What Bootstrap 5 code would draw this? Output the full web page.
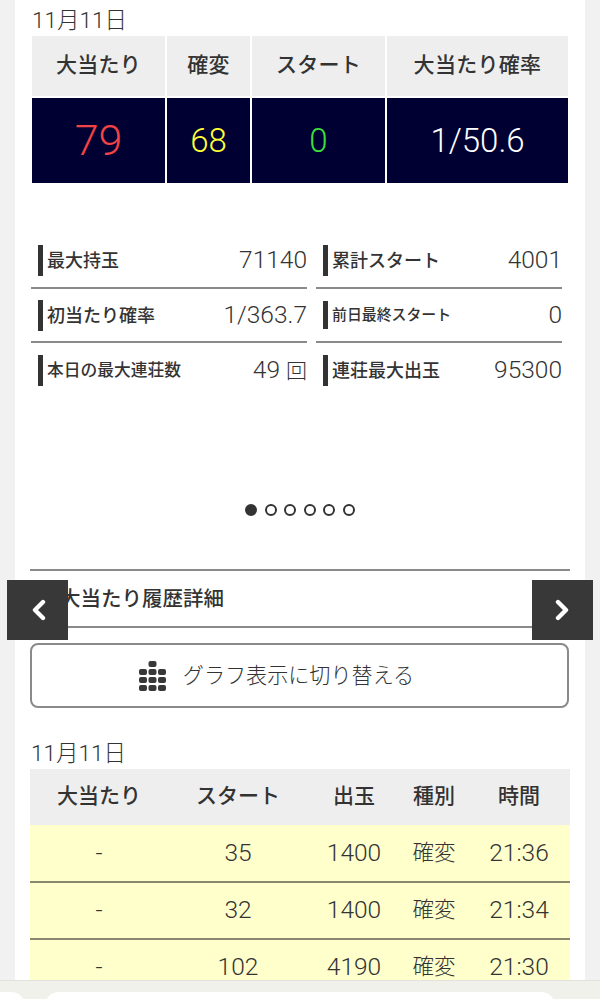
<!DOCTYPE html>
<html lang="ja">
<head>
<meta charset="utf-8">
<title>大当たり履歴</title>
<link href="https://cdn.jsdelivr.net/npm/bootstrap@5.3.0/dist/css/bootstrap.min.css" rel="stylesheet">
<style>
html,body{height:999px;overflow:hidden}
body{background:#f1f1f1;color:#333;font-family:Roboto,"Noto Sans CJK JP",sans-serif;font-weight:300}
.sheet{position:relative;width:570px;height:999px;margin:0 auto;background:#fff;padding:6px 15px 0 15px}
.day{font-size:22.5px;line-height:28px;height:30px;padding-left:2px}
.day-b{padding-left:1px;height:29px;line-height:26px}
.summary{display:grid;grid-template-columns:133px 83px 133px 181px;gap:2px;width:536px;margin-left:2px;text-align:center}
.sum-h{background:#eee;height:60px;display:flex;align-items:center;justify-content:center;font-size:21px;font-weight:500;letter-spacing:.3px}
.sum-v{background:#000033;height:85px;display:flex;align-items:center;justify-content:center;font-size:33px;color:#fff}
.sum-v.hit{font-size:43px;color:#f24345}
.sum-v.prob{color:#ffff37}
.sum-v.st{color:#3ce03c}
.stats{display:grid;grid-template-columns:276px 246px;grid-template-rows:55px 54px 54px;column-gap:9px;margin:51px 0 0 1px}
.stat{display:flex;align-items:center;justify-content:space-between;border-bottom:2px solid #8a8a8a;padding-left:7px}
.stat.last{border-bottom:0}
.stat-l{border-left:5px solid #333;padding-left:4px;height:31px;line-height:31px;font-size:18px;font-weight:500;white-space:nowrap}
.stat-l.tiny{font-size:14.9px;height:28px;line-height:28px}
.stat-l.mid{font-size:16.75px}
.stat-n{font-size:24.5px}
.stat-u{font-size:21px}
.dots{margin-top:106px;gap:7.5px;height:14px}
.dots i{display:block;width:12px;height:12px;border:2px solid #333;border-radius:50%;background:#fff}
.dots i.on{background:#333}
.sec{margin-top:52px;height:59px;border-top:2px solid #8a8a8a;border-bottom:2px solid #8a8a8a;width:540px;font-size:20.5px;font-weight:500;line-height:56px;padding-left:30px}
.switch{width:539px;height:65px;margin-top:15px;border:2px solid #8a8a8a;border-radius:8px;background:#fff;color:#333;font-size:21.1px;font-weight:300;gap:17px;padding:0 46px 0 0}
.switch:hover{background:#fff;border-color:#8a8a8a;color:#333}
.nav-arrow{position:absolute;top:580px;width:61px;height:60px;background:#383838;display:flex;align-items:center;justify-content:center}
.arrow-l{left:-8px}
.arrow-r{left:517px}
.spacer{height:32px}
.hist{width:540px;margin:0;table-layout:fixed;--bs-table-bg:transparent;--bs-table-color:#333}
.hist th,.hist td{padding:0;text-align:center;vertical-align:middle;border:0;color:#333}
.hist th{background:#eee;height:56px;font-size:21px;font-weight:500}
.hist td{background:#ffffcc;height:57px;font-size:24.5px;font-weight:300;border-bottom:2px solid #88886e}
.hist td.kind{font-size:21.5px}
.tray{position:fixed;left:0;right:0;top:980px;height:19px;background:#f1f1eb;border-top:1px solid #e2e2dc;overflow:hidden}
.tray b{position:absolute;top:11px;height:30px;background:#fff;border-radius:14px}
.t-a{left:-20px;width:45px}
.t-b{left:45px;width:510px}
</style>
</head>
<body>
<div class="sheet">
  <div class="day">11月11日</div>
  <div class="summary">
    <div class="sum-h">大当たり</div><div class="sum-h">確変</div><div class="sum-h">スタート</div><div class="sum-h">大当たり確率</div>
    <div class="sum-v hit">79</div><div class="sum-v prob">68</div><div class="sum-v st">0</div><div class="sum-v">1/50.6</div>
  </div>

  <div class="stats">
    <div class="stat"><span class="stat-l">最大持玉</span><span class="stat-n">71140</span></div>
    <div class="stat"><span class="stat-l">累計スタート</span><span class="stat-n">4001</span></div>
    <div class="stat"><span class="stat-l">初当たり確率</span><span class="stat-n">1/363.7</span></div>
    <div class="stat"><span class="stat-l tiny">前日最終スタート</span><span class="stat-n">0</span></div>
    <div class="stat last"><span class="stat-l mid">本日の最大連荘数</span><span class="stat-n">49 <span class="stat-u">回</span></span></div>
    <div class="stat last"><span class="stat-l">連荘最大出玉</span><span class="stat-n">95300</span></div>
  </div>

  <div class="dots d-flex justify-content-center align-items-center"><i class="on"></i><i></i><i></i><i></i><i></i><i></i></div>

  <div class="sec">大当たり履歴詳細</div>
  <button type="button" class="btn switch d-flex align-items-center justify-content-center">
    <svg width="27" height="30" viewBox="0 0 27 30" fill="#383838" aria-hidden="true">
      <rect x="9.5" y="0" width="8" height="6" rx="2"/>
      <rect x="0" y="8" width="8" height="6" rx="2"/><rect x="9.5" y="8" width="8" height="6" rx="2"/><rect x="19" y="8" width="8" height="6" rx="2"/>
      <rect x="0" y="16" width="8" height="6" rx="2"/><rect x="9.5" y="16" width="8" height="6" rx="2"/><rect x="19" y="16" width="8" height="6" rx="2"/>
      <rect x="0" y="24" width="8" height="6" rx="2"/><rect x="9.5" y="24" width="8" height="6" rx="2"/><rect x="19" y="24" width="8" height="6" rx="2"/>
    </svg>
    <span>グラフ表示に切り替える</span>
  </button>

  <div class="spacer"></div>
  <div class="day day-b">11月11日</div>
  <table class="table hist">
    <colgroup><col style="width:138px"><col style="width:140px"><col style="width:92px"><col style="width:68px"><col style="width:102px"></colgroup>
    <thead><tr><th>大当たり</th><th>スタート</th><th>出玉</th><th>種別</th><th>時間</th></tr></thead>
    <tbody>
      <tr><td>-</td><td>35</td><td>1400</td><td class="kind">確変</td><td>21:36</td></tr>
      <tr><td>-</td><td>32</td><td>1400</td><td class="kind">確変</td><td>21:34</td></tr>
      <tr><td>-</td><td>102</td><td>4190</td><td class="kind">確変</td><td>21:30</td></tr>
    </tbody>
  </table>

  <div class="nav-arrow arrow-l"><svg width="16" height="22" viewBox="0 0 16 22" aria-hidden="true"><path d="M13 3 5 11l8 8" fill="none" stroke="#fff" stroke-width="4.4" stroke-linecap="round" stroke-linejoin="round"/></svg></div>
  <div class="nav-arrow arrow-r"><svg width="16" height="22" viewBox="0 0 16 22" aria-hidden="true"><path d="M3 3l8 8-8 8" fill="none" stroke="#fff" stroke-width="4.4" stroke-linecap="round" stroke-linejoin="round"/></svg></div>
</div>
<div class="tray"><b class="t-a"></b><b class="t-b"></b></div>
</body>
</html>
